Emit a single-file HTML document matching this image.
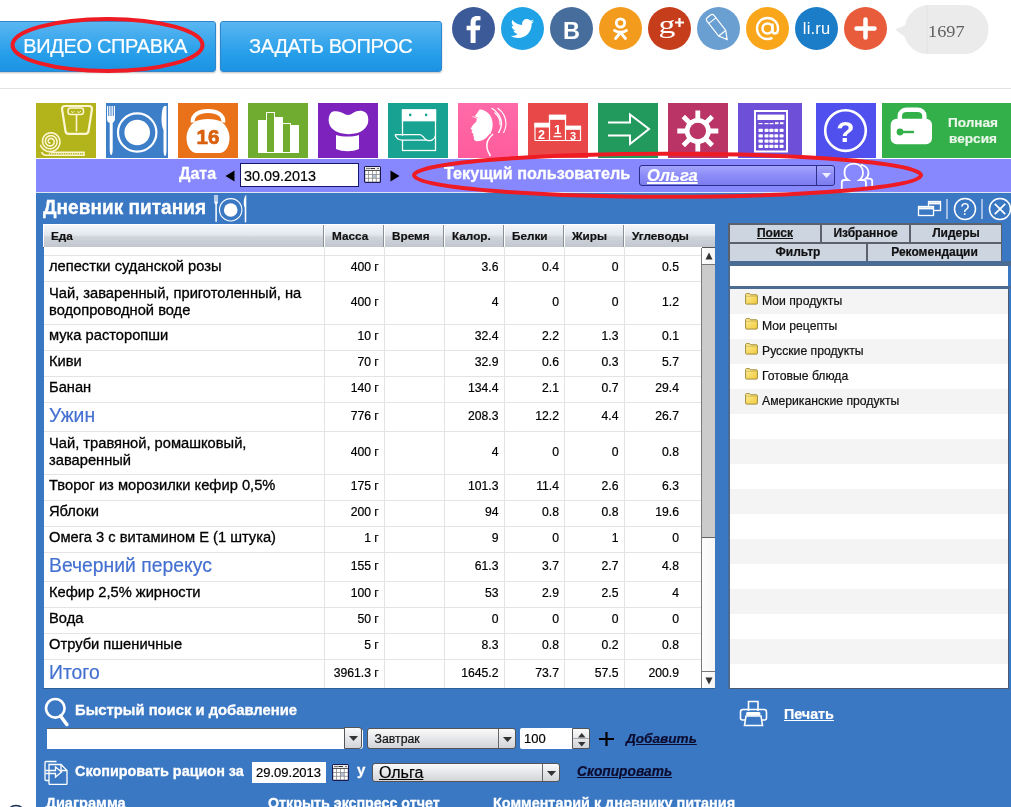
<!DOCTYPE html>
<html><head><meta charset="utf-8">
<style>
*{box-sizing:border-box}
html,body{margin:0;padding:0}
body{width:1011px;height:807px;overflow:hidden;position:relative;background:#fff;will-change:transform;font-family:"Liberation Sans",sans-serif;color:#111}
.a{position:absolute}
.btn{position:absolute;top:21px;height:51px;border-radius:3px;border:1px solid #2f86cf;background:linear-gradient(#5ab6f1,#2aa0ea 60%,#1a93e3);color:#fff;font-size:20px;letter-spacing:-0.35px;line-height:49px;box-shadow:0 1px 2px rgba(0,0,0,.25)}
.soc{position:absolute;top:7px;width:43px;height:43px;border-radius:50%}
.tile{position:absolute;top:103px;height:55px;width:60px}
.pbar{position:absolute;left:36px;top:159px;width:975px;height:33px;background:#8888fe}
.panel{position:absolute;left:36px;top:193px;width:975px;height:614px;background:#3b78c3}
.wt{color:#fff;font-weight:bold;-webkit-text-stroke:0.3px #fff}
div,span,u{-webkit-text-stroke-width:.2px}
</style></head><body>

<style>
.vl{top:0;width:1px;height:441px;background:#e4e4e4}
.hl{left:0;width:658px;height:1px;background:#e4e4e4}
.food{font-size:14.7px;color:#000;white-space:nowrap;-webkit-text-stroke:0.3px #000}
.meal{font-size:20.8px;color:#4470d0;white-space:nowrap;transform:scaleX(.93);transform-origin:0 0}
.num{font-size:12.2px;color:#000;white-space:nowrap;text-align:right;-webkit-text-stroke:0.2px #000}
.thead{background:linear-gradient(#f4f6f9,#e3e7ec 45%,#cfd3da 55%,#c2c6ce);border-top:1px solid #fff;border-bottom:1px solid #555}
.th{top:0;height:22px;border-right:1px solid #8a8e96;border-left:1px solid #fff}
.th span{position:absolute;left:7px;top:0;line-height:22px;font-size:11.75px;font-weight:bold;color:#111}
</style>
<style>
.tab{background:#ccd5e0;font-size:12px;font-weight:bold;color:#111;text-align:center;line-height:17px}
.li{font-size:12.2px;color:#111;line-height:25px;white-space:nowrap}
</style>
<style>
.dd{background:linear-gradient(#fafafa,#e6e7ea 50%,#d2d4d8);border:1px solid #555}
.lnk{font-size:14px;font-weight:bold;font-style:italic;color:#0c0c30;text-decoration:underline;line-height:18px;white-space:nowrap}
</style>
<div class="btn" style="left:-4px;width:220px;"><span class="a" style="left:26.3px;top:0">ВИДЕО СПРАВКА</span></div>
<div class="btn" style="left:220px;width:222px;"><span class="a" style="left:28px;top:0">ЗАДАТЬ ВОПРОС</span></div>
<div class="a" style="left:0;top:88px;width:1011px;height:1px;background:#e2e2e2"></div>
<!-- social -->
<div class="soc" style="left:452px;background:#3d5a98"><svg width="43" height="43" viewBox="0 0 43 43"><path d="M23.6 36V23.2h4.2l.6-4.6h-4.8v-3c0-1.3.4-2.3 2.3-2.3h2.6V9.2c-.5-.1-2-.2-3.7-.2-3.7 0-6.2 2.2-6.2 6.4v3.3h-4v4.6h4V36z" fill="#fff"/></svg></div>
<div class="soc" style="left:501px;background:#1fa3e6"><svg width="43" height="43" viewBox="0 0 43 43"><path d="M33 14.3c-.9.4-1.8.6-2.7.7 1-.6 1.7-1.5 2.1-2.6-.9.5-1.9.9-3 1.1-.9-.9-2.1-1.5-3.5-1.5-2.6 0-4.8 2.1-4.8 4.8 0 .4 0 .7.1 1.1-4-.2-7.5-2.1-9.8-5-.4.7-.6 1.5-.6 2.4 0 1.7.8 3.1 2.1 4-.8 0-1.5-.2-2.2-.6v.1c0 2.3 1.6 4.2 3.8 4.7-.4.1-.8.2-1.3.2-.3 0-.6 0-.9-.1.6 1.9 2.4 3.3 4.5 3.3-1.6 1.3-3.7 2-6 2-.4 0-.8 0-1.1-.1 2.1 1.4 4.7 2.2 7.3 2.2 8.8 0 13.6-7.3 13.6-13.6v-.6c.9-.7 1.7-1.5 2.4-2.5z" fill="#fff"/></svg></div>
<div class="soc" style="left:550px;background:#476d9d"><svg width="43" height="43" viewBox="0 0 43 43"><text x="21.5" y="31.6" text-anchor="middle" font-family="Liberation Sans" font-weight="bold" font-size="23.5" fill="#fff">B</text></svg></div>
<div class="soc" style="left:599px;background:#f39b1d"><svg width="43" height="43" viewBox="0 0 43 43"><circle cx="21.5" cy="16" r="4.2" fill="none" stroke="#fff" stroke-width="2.8"/><path d="M15.5 23.5q6 3.5 12 0M21.5 25.5l-5 6M21.5 25.5l5 6" stroke="#fff" stroke-width="2.8" fill="none" stroke-linecap="round"/></svg></div>
<div class="soc" style="left:648px;background:#c63d1b"><svg width="43" height="43" viewBox="0 0 43 43"><text x="0" y="0" transform="translate(19 26) scale(1.35 1)" text-anchor="middle" font-family="Liberation Serif" font-size="25" fill="#fff">g</text><path d="M31.5 11v9M27 15.5h9" stroke="#fff" stroke-width="2.2"/></svg></div>
<div class="soc" style="left:697px;background:#6a9fd1"><svg width="43" height="43" viewBox="0 0 43 43"><g transform="rotate(-38 21.5 21.5)" fill="none" stroke="#fff" stroke-width="1.2"><path d="M17 8.5c0-1.5 1-2.5 2.5-2.5h4c1.5 0 2.5 1 2.5 2.5v19l-4.5 8-4.5-8z"/><path d="M17 11.5h9M17 27.5h9M21.5 35.5v-2"/></g></svg></div>
<div class="soc" style="left:746px;background:#f9a61b"><svg width="43" height="43" viewBox="0 0 43 43"><circle cx="21.5" cy="21.5" r="5" fill="none" stroke="#fff" stroke-width="2.5"/><path d="M26.5 16.5v7c0 2 1 3 2.5 3s3-1.5 3-5c0-6-4.5-10.5-10.5-10.5S11 15.5 11 21.5 15.5 32 21.5 32c2 0 3.5-.5 5-1.2" fill="none" stroke="#fff" stroke-width="2.4"/></svg></div>
<div class="soc" style="left:795px;background:#1b7cc7"><svg width="43" height="43" viewBox="0 0 43 43"><text x="21.5" y="27" text-anchor="middle" font-family="Liberation Sans" font-size="16.5" fill="#fff" textLength="27.5">li.ru</text></svg></div>
<div class="soc" style="left:844px;background:#e85c3b"><svg width="43" height="43" viewBox="0 0 43 43"><path d="M21.5 12.5v18M12.5 21.5h18" stroke="#fff" stroke-width="4.5" stroke-linecap="round"/></svg></div>
<svg class="a" style="left:893px;top:4px" width="98" height="52" viewBox="0 0 98 52"><path d="M35 1h36a24.5 24.5 0 0 1 0 49H35a24.5 24.5 0 0 1-23.5-17.5L2 25.5l10-4A24.5 24.5 0 0 1 35 1z" fill="#ebebeb"/><path d="M34 1v49" stroke="#e2e2e2" stroke-width="1"/><text x="0" y="0" transform="translate(53.3 33) scale(1.12 1)" text-anchor="middle" font-family="Liberation Serif" font-size="16.3" fill="#606060">1697</text></svg>
<div class="tile" style="left:36px;background:#b3b41c"><svg width="60" height="55" viewBox="0 0 60 55" fill="none" stroke="#fdf6d2" stroke-width="2">
<path d="M29 3h24c2 0 3 1 3 3l-3.5 22c-.3 1.8-1 2.8-3 2.8H32.5c-2 0-2.7-1-3-2.8L26 6c0-2 1-3 3-3z" stroke-width="2.2"/><rect x="32" y="5" width="15.5" height="6.5" rx="2.5" stroke-width="1.5"/><path d="M35 8.5l2 1 1.5-1.5M41 8.5l2 1 2-1.5" stroke-width=".9"/><path d="M40.5 11.5v17" stroke-width="1.6"/>
<path d="M14.50 40.00 L14.34 40.04 L14.18 40.06 L14.01 40.06 L13.84 40.05 L13.67 40.02 L13.49 39.96 L13.32 39.89 L13.15 39.80 L13.00 39.68 L12.85 39.55 L12.71 39.40 L12.58 39.23 L12.47 39.05 L12.38 38.85 L12.31 38.64 L12.27 38.42 L12.24 38.19 L12.24 37.95 L12.26 37.71 L12.31 37.47 L12.39 37.23 L12.49 37.00 L12.61 36.77 L12.77 36.56 L12.94 36.36 L13.14 36.17 L13.36 36.00 L13.61 35.86 L13.86 35.74 L14.14 35.64 L14.43 35.57 L14.72 35.54 L15.03 35.53 L15.34 35.55 L15.64 35.61 L15.95 35.70 L16.25 35.82 L16.54 35.97 L16.81 36.16 L17.07 36.37 L17.31 36.61 L17.53 36.88 L17.72 37.18 L17.88 37.50 L18.01 37.83 L18.10 38.18 L18.16 38.55 L18.18 38.92 L18.17 39.30 L18.11 39.67 L18.02 40.05 L17.89 40.42 L17.71 40.77 L17.50 41.12 L17.26 41.44 L16.98 41.74 L16.66 42.01 L16.32 42.25 L15.95 42.46 L15.56 42.63 L15.15 42.76 L14.72 42.85 L14.28 42.89 L13.83 42.89 L13.38 42.85 L12.94 42.76 L12.50 42.62 L12.07 42.44 L11.66 42.21 L11.27 41.94 L10.91 41.63 L10.57 41.28 L10.27 40.89 L10.01 40.48 L9.79 40.03 L9.62 39.56 L9.49 39.07 L9.41 38.56 L9.39 38.05 L9.41 37.53 L9.49 37.01 L9.62 36.50 L9.81 36.00 L10.04 35.51 L10.33 35.05 L10.67 34.62 L11.05 34.22 L11.47 33.85 L11.93 33.53 L12.42 33.26 L12.95 33.03 L13.50 32.86 L14.06 32.74 L14.65 32.68 L15.24 32.68 L15.83 32.73 L16.41 32.85 L16.99 33.03 L17.55 33.27 L18.09 33.56 L18.59 33.92 L19.07 34.32 L19.50 34.77 L19.89 35.27 L20.23 35.80 L20.51 36.38 L20.74 36.98 L20.91 37.61 L21.01 38.25 L21.05 38.91 L21.02 39.57 L20.92 40.24 L20.76 40.89 L20.53 41.52 L20.23 42.14 L19.88 42.72 L19.46 43.27 L18.98 43.78 L18.46 44.24 L17.88 44.65 L17.27 45.00 L16.61 45.29 L15.93 45.51 L15.22 45.67 L14.50 45.75 L13.77 45.76 L13.03 45.69 L12.31 45.55 L11.59 45.34 L10.90 45.05 L10.23 44.70 L9.60 44.27 L9.01 43.78 L8.47 43.24 L7.99 42.63 L7.57 41.98 L7.21 41.28 L6.92 40.55 L6.71 39.78 L6.58 39.00 L6.52 38.20 L6.54 37.39 L6.65 36.59 L6.84 35.80 L7.11 35.02 L7.45 34.27 L7.88 33.56 L8.37 32.89 L8.94 32.27 L9.56 31.70 L10.25 31.20 L10.98 30.77 L11.76 30.41 L12.57 30.13 L13.42 29.94 L14.28 29.83 L15.16 29.80 L16.03 29.87 L16.91 30.02 L17.76 30.26 L18.59 30.59 L19.39 31.00 L20.15 31.50 L20.85 32.06 L21.50 32.71 L22.09 33.41 L22.60 34.18 L23.04 35.00 L23.39 35.86 L23.65 36.75 L23.83 37.68 L23.91 38.62 L23.90 39.57 L23.79 40.51 L23.58 41.45 L23.28 42.37 L22.89 43.25 L22.41 44.10 L21.84 44.89 L21.19 45.63 L20.47 46.30 L19.68 46.90 L18.84 47.42 L17.93 47.85 L16.99 48.20 L16.01 48.44 L15.01 48.59 L13.99 48.64 L12.97 48.58 L11.95 48.42 L10.96 48.16 L9.98 47.79 L9.05 47.33 L8.16 46.78 L7.33 46.13 L6.57 45.40 L5.88 44.60 L5.27 43.73 L4.75 42.79 L4.32 41.81" stroke-width="1.6"/><path d="M14.5 49.2H48v3H10c-2 0-3.5-1-4.5-3" stroke-width="1.6"/><path d="M13 50.7h33" stroke-dasharray="1 1.3" stroke-width="1.4"/></svg></div>
<div class="tile" style="left:106px;width:62px;background:#3d7ec8"><svg width="62" height="55" viewBox="0 0 62 55" fill="#fff">
<path d="M1 3h1.2v10h1v-10h1.3v10h1v-10h1.3v10h1v-10h1.2v13c0 2-1.5 3-2.3 4v26c0 3-.5 6-1.5 6s-1.5-3-1.5-6v-26C1.5 19 1 18 1 16z"/>
<circle cx="31.2" cy="29.5" r="19.2" fill="none" stroke="#fff" stroke-width="2.2"/><circle cx="31.2" cy="29.5" r="12.8"/>
<path d="M58.5 3c-2 1-3 6-3 14 0 5 1.5 9 2 10v20c0 3 .6 6 1.6 6s1.4-3 1.4-6V3z"/></svg></div>
<div class="tile" style="left:178px;background:#e9711a"><svg width="60" height="55" viewBox="0 0 60 55">
<path d="M14.8 19.5c-1-7.5 6-11.5 15.2-11.5s16.2 4 15.2 11.5" fill="none" stroke="#fff" stroke-width="4"/>
<path d="M17 18.5C12 22 8.5 28 8.5 35c0 9 5 15 10 15h23c5 0 10-6 10-15 0-7-3.5-13-8.5-16.5-3-1.5-8-2.5-13-2.5s-10 1-13 2.5z" fill="#fff"/>
<text x="30" y="40.8" text-anchor="middle" font-family="Liberation Sans" font-weight="bold" font-size="20.5" fill="#d9600e" stroke="#d9600e" stroke-width=".7">16</text></svg></div>
<div class="tile" style="left:248px;background:#6fac30"><svg width="60" height="55" viewBox="0 0 60 55" stroke="#fff" stroke-width="1">
<rect x="10.5" y="17.5" width="8" height="32" fill="#fff"/><rect x="18.5" y="9.5" width="8" height="40" fill="#6fac30"/><rect x="26.5" y="14.5" width="8" height="35" fill="#fff"/><rect x="34.5" y="20.5" width="8" height="29" fill="#6fac30"/><rect x="42.5" y="22.5" width="8" height="27" fill="#fff"/></svg></div>
<div class="tile" style="left:318px;background:#7d22bd"><svg width="60" height="55" viewBox="0 0 60 55" fill="#fff">
<path d="M15 8.5c4-1 9 .5 12.5 3 3 1 5 .5 7.5-1.5 4-2.5 9-3 12.5-.5 3 2.5 3.5 8 2 12-2 4.5-6 7-10 8.5-6 1.5-12 1.5-17.5 0-5-1.5-10-5-11-10-1-5 .5-10.5 4-11.5z"/>
<path d="M18 32c7 2 16 2 23 0v14c-7 3-16 3-23 0z"/></svg></div>
<div class="tile" style="left:388px;background:#17a292"><svg width="60" height="55" viewBox="0 0 60 55" fill="none" stroke="#fff" stroke-width="1.3">
<rect x="14.5" y="7" width="33" height="40.5"/><rect x="14.5" y="7" width="33" height="10.7" fill="#fff"/><circle cx="22.2" cy="11.9" r="1.3" fill="#17a292" stroke="none"/><circle cx="38.1" cy="11.9" r="1.3" fill="#17a292" stroke="none"/>
<path d="M7 31.6H32c2.5 0 3.5 4 6.8 5.5 4 1.5 8.2-.5 8.7-5M7 31.6c1 3 3.5 5.5 7 5.5h24.8" fill="#17a292" stroke-width="1.3"/></svg></div>
<div class="tile" style="left:458px;background:linear-gradient(#ff6aa8,#ff5c9c)"><svg width="60" height="55" viewBox="0 0 60 55" fill="#fff">
<path d="M21.5 6.5c-1.5 2.5-3 4.5-4.5 6.5 1 1.5 2 1.5 3 1.5-1.5 2-2 3-1.5 4-3 2.5-5 5-6 7.5l2 1-1 2c.5 1 1.5 1.5 2 1.5-.5 1.5-.5 2.5.5 3.5-.5 2 0 3.5 2 4 2 .5 5 0 8-1.5 3.5-2.5 6.5-6 8-10 1.5-5 .5-11-2.5-15-2.5-3-6-5-9.5-5z"/>
<path d="M14.5 13.5c2 .5 4 1.5 5.5 3" fill="none" stroke="#fff" stroke-width=".9"/>
<path d="M33.5 5c5.5 3 10 9.5 10 15.5 0 4-1.5 7-3 9.5" fill="none" stroke="#fff" stroke-width="1.4"/><path d="M36.5 9.5c4 3.5 6 8 5.5 12.5" fill="none" stroke="#fff" stroke-width="1.1"/><path d="M39.5 5c5 3.5 8.5 9.5 8.5 16 0 4-1.5 7-2.5 9" fill="none" stroke="#fff" stroke-width="1.1"/><path d="M30 17c3 4 4 9 2 14" fill="none" stroke="#fff" stroke-width="1"/>
<path d="M35 31c-4.5 4-7 9-6 14 .5 3 2 5.5 3.5 8" fill="none" stroke="#fff" stroke-width="1.5"/></svg></div>
<div class="tile" style="left:528px;background:#e94848"><svg width="60" height="55" viewBox="0 0 60 55" fill="none" stroke="#fff" stroke-width="1.2">
<path d="M21.5 37.5V12.5h16v25M7 37.5v-17h14.5M37.5 23.5h15v14H7" /><rect x="21.5" y="12.2" width="16" height="4" fill="#fff"/><rect x="7" y="20.3" width="14.5" height="3.6" fill="#fff"/><rect x="37.5" y="23.2" width="15" height="3" fill="#fff"/>
<g fill="#fff" stroke="none" font-family="Liberation Sans" font-weight="bold"><text x="13.5" y="36" text-anchor="middle" font-size="12.5">2</text><text x="29.5" y="31" text-anchor="middle" font-size="13">1</text><text x="45" y="37" text-anchor="middle" font-size="11">3</text></g><path d="M25.5 33.5h8" stroke-width="1.5"/></svg></div>
<div class="tile" style="left:598px;background:#229a5e"><svg width="60" height="55" viewBox="0 0 60 55" fill="none" stroke="#fff" stroke-width="2">
<path d="M10 19.5h22V11.5L51 26 32 41V32.5H10"/></svg></div>
<div class="tile" style="left:668px;background:#ba3566"><svg width="60" height="55" viewBox="0 0 60 55">
<g stroke="#fff" stroke-width="4.8"><path d="M29.8 7.5v41M9.3 28h41M15.3 13.5l29 29M44.3 13.5l-29 29"/></g><circle cx="29.8" cy="28" r="13" fill="#fff"/><circle cx="29.8" cy="28" r="8.3" fill="#ba3566"/></svg></div>
<div class="tile" style="left:738px;width:64px;background:#6e50d8"><svg width="64" height="55" viewBox="0 0 64 55" fill="#fff">
<path d="M16 7h34v42.5H16z M18 9v38.5h30V9z" fill-rule="evenodd"/><rect x="19.5" y="11.6" width="27" height="5.4"/>
<rect x="20.5" y="20" width="4" height="1.2"/><rect x="26.5" y="20" width="4" height="1.2"/><rect x="31.5" y="20" width="4" height="1.2"/><rect x="37" y="19.2" width="3.5" height="2"/><rect x="42" y="19.2" width="3.5" height="2"/>
<rect x="20.5" y="25.8" width="4.4" height="3.2" rx=".7"/><rect x="26.5" y="25.8" width="4" height="3.2" rx=".7"/><rect x="31.3" y="25.8" width="4.2" height="3.2" rx=".7"/><rect x="36.4" y="25.8" width="3.8" height="3.2" rx=".7"/><rect x="41.6" y="25.8" width="4" height="3.2" rx=".7"/><rect x="20.5" y="31.2" width="4.4" height="3.2" rx=".7"/><rect x="26.5" y="31.2" width="4" height="3.2" rx=".7"/><rect x="31.3" y="31.2" width="4.2" height="3.2" rx=".7"/><rect x="36.4" y="31.2" width="3.8" height="3.2" rx=".7"/><rect x="41.6" y="31.2" width="4" height="3.2" rx=".7"/><rect x="20.5" y="36.5" width="4.4" height="3.2" rx=".7"/><rect x="26.5" y="36.5" width="4" height="3.2" rx=".7"/><rect x="31.3" y="36.5" width="4.2" height="3.2" rx=".7"/><rect x="36.4" y="36.5" width="3.8" height="3.2" rx=".7"/><rect x="41.6" y="36.5" width="4" height="3.2" rx=".7"/><rect x="20.5" y="41.8" width="4.4" height="3.2" rx=".7"/><rect x="26.5" y="41.8" width="4" height="3.2" rx=".7"/><rect x="31.3" y="41.8" width="4.2" height="3.2" rx=".7"/><rect x="36.4" y="41.8" width="3.8" height="3.2" rx=".7"/><rect x="41.6" y="41.8" width="4" height="3.2" rx=".7"/></svg></div>
<div class="tile" style="left:816px;background:#5050ee"><svg width="60" height="55" viewBox="0 0 60 55">
<circle cx="29.5" cy="27.6" r="20.3" fill="none" stroke="#fff" stroke-width="2.6"/><text x="29.5" y="38.5" text-anchor="middle" font-family="Liberation Sans" font-weight="bold" font-size="30" fill="#fff">?</text></svg></div>
<div class="tile" style="left:882px;width:129px;background:#33b04a"><svg width="60" height="55" viewBox="0 0 60 55">
<path d="M17.8 17.5V13c0-4 3-6.3 7-6.3h10.6c4 0 7 2.3 7 6.3v4.5" fill="none" stroke="#fff" stroke-width="4.4"/>
<rect x="8.7" y="15.8" width="41.3" height="25.5" rx="6" fill="#fff"/><circle cx="18" cy="29" r="3.4" fill="#33b04a"/><path d="M18 29h14" stroke="#33b04a" stroke-width="2.4"/></svg>
<div class="a" style="left:63px;top:11.7px;color:#eaf6ea;font-weight:bold;font-size:13.6px;line-height:16px;width:56px;text-align:center">Полная<br>версия</div></div>
<div class="pbar"></div>
<div class="a wt" style="left:179px;top:164px;font-size:16px;line-height:20px">Дата</div>
<svg class="a" style="left:225px;top:170px" width="10" height="12"><path d="M9.5 .5v11L.5 6z" fill="#000"/></svg>
<div class="a" style="left:240px;top:163px;width:119px;height:24px;background:#fff;border:1px solid #14146a;font-size:14.4px;line-height:25px;padding-left:3px;color:#000">30.09.2013</div>
<svg class="a" style="left:364px;top:166px" width="17" height="17" viewBox="0 0 17 17"><rect x=".6" y=".6" width="15.8" height="15.8" rx="1" fill="#fff" stroke="#1a1a50" stroke-width="1.2"/><rect x="1" y="1" width="15" height="3.5" fill="#eee"/><path d="M1 4.5h15" stroke="#555" stroke-width="1"/><g fill="#333"><circle cx="3" cy="2.5" r=".7"/><circle cx="5" cy="2.5" r=".7"/><rect x="6.5" y="2" width="4.5" height="1"/><circle cx="14" cy="2.5" r=".7"/></g><rect x="8.5" y="8.5" width="3.5" height="3.5" fill="#b8c4dc"/><path d="M4.5 5v11M8.5 5v11M12.3 5v11M1 8.5h15M1 12.3h15" stroke="#888" stroke-width=".8"/></svg>
<svg class="a" style="left:389.5px;top:169.5px" width="10" height="12"><path d="M.5 .5v11L9.5 6z" fill="#000"/></svg>
<div class="a wt" style="left:444px;top:162.8px;font-size:16.2px;line-height:20px">Текущий пользователь</div>
<div class="a" style="left:639px;top:165px;width:196px;height:21px;border:1px solid #2c2c8a;border-radius:3px;background:linear-gradient(#a4a4fd,#8c8cf8 50%,#7c7cf0)"><span class="a" style="left:7px;top:-1px;line-height:20px;font-size:16.5px;font-weight:bold;font-style:italic;color:#fff;text-decoration:underline;text-decoration-thickness:2px">Ольга</span><div class="a" style="left:176px;top:0;width:1px;height:19px;background:#2c2c8a"></div><svg class="a" style="left:182px;top:7px" width="9" height="5"><path d="M0 0h9L4.5 5z" fill="#eef"/></svg></div>
<svg class="a" style="left:840px;top:162px" width="36" height="30" viewBox="0 0 36 30" fill="none" stroke="#fff" stroke-width="1.8"><path d="M1.8 27V20.5Q1.8 18 4.3 18H8.2C5.5 16.2 4.5 13.2 4.5 10.2 4.5 5 8.5 1.6 13.8 1.6S23 5 23 10.2C23 13.2 22 16.2 19.4 18H23.5Q26 18 26 20.5V27"/><path d="M20.8 2.6C25 3.5 28.5 6.5 28.5 10.5 28.5 13 27.5 15.2 25.6 16.6H29.5Q32.2 16.6 32.2 19.2V26"/></svg>
<div class="panel"></div>
<div class="a" style="left:36px;top:192px;width:975px;height:1px;background:#dfe6f3"></div>
<div class="a wt" style="left:43px;top:194.5px;font-size:20.5px;line-height:24px;transform:scaleX(0.93);transform-origin:0 0;white-space:nowrap">Дневник питания</div>
<svg class="a" style="left:213px;top:194px" width="35" height="30" viewBox="0 0 35 30" fill="#fff"><path d="M1.3 1h3.6v7.5c0 .8-.5 1.5-1 2v16.5c0 .6-.3 1-.8 1s-.8-.4-.8-1V10.5c-.5-.5-1-1.2-1-2z" opacity=".95"/><rect x="1.3" y="1" width="3.6" height="6.5" fill="#b8cde8"/><circle cx="17.7" cy="15.8" r="11.2" fill="none" stroke="#fff" stroke-width="1.1"/><circle cx="17.7" cy="16" r="6.8"/><path d="M33.3 1c-1.3.6-2.6 3.5-2.6 8 0 2.5.8 4 1 4.5v14c0 .6.3 1 .8 1s.8-.4.8-1z"/></svg>
<!-- top right icons -->
<svg class="a" style="left:916px;top:197px" width="95" height="26" viewBox="0 0 95 26" fill="none" stroke="#fff"><g stroke-width="1.3"><rect x="12.5" y="4.5" width="12" height="9"/><path d="M12.5 6.3h12" stroke-width="2.2"/><rect x="2.5" y="9.5" width="15" height="9" fill="#3b78c3"/><path d="M2.5 11.3h15" stroke-width="2.2"/></g><path d="M31 2v20M66 2v20" stroke-width="1.2" stroke="#e4ecf8"/><circle cx="49" cy="12" r="10.5" stroke-width="1.5"/><text x="49" y="17.5" text-anchor="middle" font-family="Liberation Sans" font-size="16" fill="#fff" stroke="none">?</text><circle cx="84" cy="12" r="10.5" stroke-width="1.5"/><path d="M78.8 6.8l10.4 10.4M89.2 6.8L78.8 17.2" stroke-width="1.7"/></svg>
<!-- table header -->
<div class="a thead" style="left:43px;top:224px;width:672px;height:24px">
 <div class="a th" style="left:0;width:281px"><span>Еда</span></div>
 <div class="a th" style="left:281px;width:60px"><span>Масса</span></div>
 <div class="a th" style="left:341px;width:60px"><span>Время</span></div>
 <div class="a th" style="left:401px;width:60px"><span>Калор.</span></div>
 <div class="a th" style="left:461px;width:60px"><span>Белки</span></div>
 <div class="a th" style="left:521px;width:60px"><span>Жиры</span></div>
 <div class="a th" style="left:581px;width:91px;border-right:0"><span>Углеводы</span></div>
</div>
<div class="a" style="left:44px;top:247px;width:658px;height:441px;background:#fff;overflow:hidden">
<div class="a vl" style="left:280px"></div>
<div class="a vl" style="left:340px"></div>
<div class="a vl" style="left:400px"></div>
<div class="a vl" style="left:460px"></div>
<div class="a vl" style="left:520px"></div>
<div class="a vl" style="left:580px"></div>
<div class="a hl" style="top:8px"></div>
<div class="a hl" style="top:34px"></div>
<div class="a hl" style="top:77px"></div>
<div class="a hl" style="top:103px"></div>
<div class="a hl" style="top:129px"></div>
<div class="a hl" style="top:155px"></div>
<div class="a hl" style="top:184px"></div>
<div class="a hl" style="top:227px"></div>
<div class="a hl" style="top:253px"></div>
<div class="a hl" style="top:279px"></div>
<div class="a hl" style="top:305px"></div>
<div class="a hl" style="top:334px"></div>
<div class="a hl" style="top:360px"></div>
<div class="a hl" style="top:386px"></div>
<div class="a hl" style="top:412px"></div>
<div class="a food" style="left:5px;top:7px;height:25px;line-height:25px">лепестки суданской розы</div>
<div class="a num" style="right:323.2px;top:8px;height:25px;line-height:25px">400 г</div>
<div class="a num" style="right:203.5px;top:8px;height:25px;line-height:25px">3.6</div>
<div class="a num" style="right:143.0px;top:8px;height:25px;line-height:25px">0.4</div>
<div class="a num" style="right:83.5px;top:8px;height:25px;line-height:25px">0</div>
<div class="a num" style="right:23.0px;top:8px;height:25px;line-height:25px">0.5</div>
<div class="a food" style="left:5px;top:38.3px;line-height:17px">Чай, заваренный, приготоленный, на<br>водопроводной воде</div>
<div class="a num" style="right:323.2px;top:34px;height:42px;line-height:42px">400 г</div>
<div class="a num" style="right:203.5px;top:34px;height:42px;line-height:42px">4</div>
<div class="a num" style="right:143.0px;top:34px;height:42px;line-height:42px">0</div>
<div class="a num" style="right:83.5px;top:34px;height:42px;line-height:42px">0</div>
<div class="a num" style="right:23.0px;top:34px;height:42px;line-height:42px">1.2</div>
<div class="a food" style="left:5px;top:76px;height:25px;line-height:25px">мука расторопши</div>
<div class="a num" style="right:323.2px;top:77px;height:25px;line-height:25px">10 г</div>
<div class="a num" style="right:203.5px;top:77px;height:25px;line-height:25px">32.4</div>
<div class="a num" style="right:143.0px;top:77px;height:25px;line-height:25px">2.2</div>
<div class="a num" style="right:83.5px;top:77px;height:25px;line-height:25px">1.3</div>
<div class="a num" style="right:23.0px;top:77px;height:25px;line-height:25px">0.1</div>
<div class="a food" style="left:5px;top:102px;height:25px;line-height:25px">Киви</div>
<div class="a num" style="right:323.2px;top:103px;height:25px;line-height:25px">70 г</div>
<div class="a num" style="right:203.5px;top:103px;height:25px;line-height:25px">32.9</div>
<div class="a num" style="right:143.0px;top:103px;height:25px;line-height:25px">0.6</div>
<div class="a num" style="right:83.5px;top:103px;height:25px;line-height:25px">0.3</div>
<div class="a num" style="right:23.0px;top:103px;height:25px;line-height:25px">5.7</div>
<div class="a food" style="left:5px;top:128px;height:25px;line-height:25px">Банан</div>
<div class="a num" style="right:323.2px;top:129px;height:25px;line-height:25px">140 г</div>
<div class="a num" style="right:203.5px;top:129px;height:25px;line-height:25px">134.4</div>
<div class="a num" style="right:143.0px;top:129px;height:25px;line-height:25px">2.1</div>
<div class="a num" style="right:83.5px;top:129px;height:25px;line-height:25px">0.7</div>
<div class="a num" style="right:23.0px;top:129px;height:25px;line-height:25px">29.4</div>
<div class="a meal" style="left:5px;top:153.55px;height:28px;line-height:28px">Ужин</div>
<div class="a num" style="right:323.2px;top:155px;height:28px;line-height:28px">776 г</div>
<div class="a num" style="right:203.5px;top:155px;height:28px;line-height:28px">208.3</div>
<div class="a num" style="right:143.0px;top:155px;height:28px;line-height:28px">12.2</div>
<div class="a num" style="right:83.5px;top:155px;height:28px;line-height:28px">4.4</div>
<div class="a num" style="right:23.0px;top:155px;height:28px;line-height:28px">26.7</div>
<div class="a food" style="left:5px;top:188.3px;line-height:17px">Чай, травяной, ромашковый,<br>заваренный</div>
<div class="a num" style="right:323.2px;top:184px;height:42px;line-height:42px">400 г</div>
<div class="a num" style="right:203.5px;top:184px;height:42px;line-height:42px">4</div>
<div class="a num" style="right:143.0px;top:184px;height:42px;line-height:42px">0</div>
<div class="a num" style="right:83.5px;top:184px;height:42px;line-height:42px">0</div>
<div class="a num" style="right:23.0px;top:184px;height:42px;line-height:42px">0.8</div>
<div class="a food" style="left:5px;top:226px;height:25px;line-height:25px">Творог из морозилки кефир 0,5%</div>
<div class="a num" style="right:323.2px;top:227px;height:25px;line-height:25px">175 г</div>
<div class="a num" style="right:203.5px;top:227px;height:25px;line-height:25px">101.3</div>
<div class="a num" style="right:143.0px;top:227px;height:25px;line-height:25px">11.4</div>
<div class="a num" style="right:83.5px;top:227px;height:25px;line-height:25px">2.6</div>
<div class="a num" style="right:23.0px;top:227px;height:25px;line-height:25px">6.3</div>
<div class="a food" style="left:5px;top:252px;height:25px;line-height:25px">Яблоки</div>
<div class="a num" style="right:323.2px;top:253px;height:25px;line-height:25px">200 г</div>
<div class="a num" style="right:203.5px;top:253px;height:25px;line-height:25px">94</div>
<div class="a num" style="right:143.0px;top:253px;height:25px;line-height:25px">0.8</div>
<div class="a num" style="right:83.5px;top:253px;height:25px;line-height:25px">0.8</div>
<div class="a num" style="right:23.0px;top:253px;height:25px;line-height:25px">19.6</div>
<div class="a food" style="left:5px;top:278px;height:25px;line-height:25px">Омега 3 с витамином Е (1 штука)</div>
<div class="a num" style="right:323.2px;top:279px;height:25px;line-height:25px">1 г</div>
<div class="a num" style="right:203.5px;top:279px;height:25px;line-height:25px">9</div>
<div class="a num" style="right:143.0px;top:279px;height:25px;line-height:25px">0</div>
<div class="a num" style="right:83.5px;top:279px;height:25px;line-height:25px">1</div>
<div class="a num" style="right:23.0px;top:279px;height:25px;line-height:25px">0</div>
<div class="a meal" style="left:5px;top:303.55px;height:28px;line-height:28px">Вечерний перекус</div>
<div class="a num" style="right:323.2px;top:305px;height:28px;line-height:28px">155 г</div>
<div class="a num" style="right:203.5px;top:305px;height:28px;line-height:28px">61.3</div>
<div class="a num" style="right:143.0px;top:305px;height:28px;line-height:28px">3.7</div>
<div class="a num" style="right:83.5px;top:305px;height:28px;line-height:28px">2.7</div>
<div class="a num" style="right:23.0px;top:305px;height:28px;line-height:28px">4.8</div>
<div class="a food" style="left:5px;top:333px;height:25px;line-height:25px">Кефир 2,5% жирности</div>
<div class="a num" style="right:323.2px;top:334px;height:25px;line-height:25px">100 г</div>
<div class="a num" style="right:203.5px;top:334px;height:25px;line-height:25px">53</div>
<div class="a num" style="right:143.0px;top:334px;height:25px;line-height:25px">2.9</div>
<div class="a num" style="right:83.5px;top:334px;height:25px;line-height:25px">2.5</div>
<div class="a num" style="right:23.0px;top:334px;height:25px;line-height:25px">4</div>
<div class="a food" style="left:5px;top:359px;height:25px;line-height:25px">Вода</div>
<div class="a num" style="right:323.2px;top:360px;height:25px;line-height:25px">50 г</div>
<div class="a num" style="right:203.5px;top:360px;height:25px;line-height:25px">0</div>
<div class="a num" style="right:143.0px;top:360px;height:25px;line-height:25px">0</div>
<div class="a num" style="right:83.5px;top:360px;height:25px;line-height:25px">0</div>
<div class="a num" style="right:23.0px;top:360px;height:25px;line-height:25px">0</div>
<div class="a food" style="left:5px;top:385px;height:25px;line-height:25px">Отруби пшеничные</div>
<div class="a num" style="right:323.2px;top:386px;height:25px;line-height:25px">5 г</div>
<div class="a num" style="right:203.5px;top:386px;height:25px;line-height:25px">8.3</div>
<div class="a num" style="right:143.0px;top:386px;height:25px;line-height:25px">0.8</div>
<div class="a num" style="right:83.5px;top:386px;height:25px;line-height:25px">0.2</div>
<div class="a num" style="right:23.0px;top:386px;height:25px;line-height:25px">0.8</div>
<div class="a meal" style="left:5px;top:410.55px;height:28px;line-height:28px">Итого</div>
<div class="a num" style="right:323.2px;top:412px;height:28px;line-height:28px">3961.3 г</div>
<div class="a num" style="right:203.5px;top:412px;height:28px;line-height:28px">1645.2</div>
<div class="a num" style="right:143.0px;top:412px;height:28px;line-height:28px">73.7</div>
<div class="a num" style="right:83.5px;top:412px;height:28px;line-height:28px">57.5</div>
<div class="a num" style="right:23.0px;top:412px;height:28px;line-height:28px">200.9</div>
</div><!-- scrollbar -->
<div class="a" style="left:701px;top:248px;width:14px;height:440px;background:linear-gradient(90deg,#fdfdfd,#f6f6f6);border-left:1px solid #7a7a7a"></div>
<div class="a" style="left:702px;top:264px;width:13px;height:274px;background:#cbcbcb;border-bottom:1px solid #666"></div>
<div class="a" style="left:702px;top:248px;width:13px;height:17px;background:linear-gradient(90deg,#fff,#f4f4f4);border-bottom:1px solid #777"></div>
<svg class="a" style="left:704.5px;top:251.5px" width="8" height="8"><path d="M4 .5L7.5 7.5H.5z" fill="#333"/></svg>
<div class="a" style="left:702px;top:671px;width:13px;height:17px;background:linear-gradient(90deg,#fff,#f4f4f4);border-top:1px solid #777"></div>
<svg class="a" style="left:704.5px;top:676.5px" width="8" height="8"><path d="M4 7.5L7.5 .5H.5z" fill="#333"/></svg>
<div class="a" style="left:43px;top:688px;width:672px;height:1px;background:#30609a"></div>
<!-- right tabs -->
<div class="a" style="left:728px;top:223px;width:274px;height:39px;background:#5b626b"></div>
<div class="a tab" style="left:730px;top:225px;width:90px;height:17px"><u>Поиск</u></div>
<div class="a tab" style="left:822px;top:225px;width:87px;height:17px">Избранное</div>
<div class="a tab" style="left:911px;top:225px;width:90px;height:17px">Лидеры</div>
<div class="a tab" style="left:730px;top:244px;width:136px;height:17px">Фильтр</div>
<div class="a tab" style="left:868px;top:244px;width:133px;height:17px">Рекомендации</div>
<div class="a" style="left:728px;top:261px;width:283px;height:5px;background:#4b6b93"></div>
<div class="a" style="left:728px;top:266px;width:2px;height:423px;background:#4b6b93"></div>
<div class="a" style="left:730px;top:266px;width:278px;height:20px;background:#fff"></div>
<div class="a" style="left:728px;top:286px;width:283px;height:3px;background:#4b6b93"></div>
<div class="a" style="left:730px;top:289px;width:279px;height:400px;background:#fff;border-right:1px solid #4a5a70;border-bottom:1px solid #4a5a70"></div>
<div class="a" style="left:730px;top:289px;width:278px;height:399px;overflow:hidden">
<div class="a" style="left:0;top:0px;width:278px;height:25px;background:#f4f4f4"></div>
<div class="a" style="left:0;top:25px;width:278px;height:25px;background:#fff"></div>
<div class="a" style="left:0;top:50px;width:278px;height:25px;background:#f4f4f4"></div>
<div class="a" style="left:0;top:75px;width:278px;height:25px;background:#fff"></div>
<div class="a" style="left:0;top:100px;width:278px;height:25px;background:#f4f4f4"></div>
<div class="a" style="left:0;top:125px;width:278px;height:25px;background:#fff"></div>
<div class="a" style="left:0;top:150px;width:278px;height:25px;background:#f4f4f4"></div>
<div class="a" style="left:0;top:175px;width:278px;height:25px;background:#fff"></div>
<div class="a" style="left:0;top:200px;width:278px;height:25px;background:#f4f4f4"></div>
<div class="a" style="left:0;top:225px;width:278px;height:25px;background:#fff"></div>
<div class="a" style="left:0;top:250px;width:278px;height:25px;background:#f4f4f4"></div>
<div class="a" style="left:0;top:275px;width:278px;height:25px;background:#fff"></div>
<div class="a" style="left:0;top:300px;width:278px;height:25px;background:#f4f4f4"></div>
<div class="a" style="left:0;top:325px;width:278px;height:25px;background:#fff"></div>
<div class="a" style="left:0;top:350px;width:278px;height:25px;background:#f4f4f4"></div>
<div class="a" style="left:0;top:375px;width:278px;height:25px;background:#fff"></div>
<svg class="a" style="left:15px;top:4px" width="13" height="12" viewBox="0 0 13 12"><path d="M.6 1.6C.6 1 1 .6 1.5.6h3l1.1 1.2h5.8c.6 0 1 .4 1 1v7.4c0 .5-.4.9-1 .9H1.5c-.5 0-.9-.4-.9-.9z" fill="url(#fg)" stroke="#a08c3c" stroke-width="1"/><path d="M1.2 3.3h10.6" stroke="#c8b050" stroke-width=".7"/></svg>
<div class="a li" style="left:32px;top:0px">Мои продукты</div>
<svg class="a" style="left:15px;top:29px" width="13" height="12" viewBox="0 0 13 12"><path d="M.6 1.6C.6 1 1 .6 1.5.6h3l1.1 1.2h5.8c.6 0 1 .4 1 1v7.4c0 .5-.4.9-1 .9H1.5c-.5 0-.9-.4-.9-.9z" fill="url(#fg)" stroke="#a08c3c" stroke-width="1"/><path d="M1.2 3.3h10.6" stroke="#c8b050" stroke-width=".7"/></svg>
<div class="a li" style="left:32px;top:25px">Мои рецепты</div>
<svg class="a" style="left:15px;top:54px" width="13" height="12" viewBox="0 0 13 12"><path d="M.6 1.6C.6 1 1 .6 1.5.6h3l1.1 1.2h5.8c.6 0 1 .4 1 1v7.4c0 .5-.4.9-1 .9H1.5c-.5 0-.9-.4-.9-.9z" fill="url(#fg)" stroke="#a08c3c" stroke-width="1"/><path d="M1.2 3.3h10.6" stroke="#c8b050" stroke-width=".7"/></svg>
<div class="a li" style="left:32px;top:50px">Русские продукты</div>
<svg class="a" style="left:15px;top:79px" width="13" height="12" viewBox="0 0 13 12"><path d="M.6 1.6C.6 1 1 .6 1.5.6h3l1.1 1.2h5.8c.6 0 1 .4 1 1v7.4c0 .5-.4.9-1 .9H1.5c-.5 0-.9-.4-.9-.9z" fill="url(#fg)" stroke="#a08c3c" stroke-width="1"/><path d="M1.2 3.3h10.6" stroke="#c8b050" stroke-width=".7"/></svg>
<div class="a li" style="left:32px;top:75px">Готовые блюда</div>
<svg class="a" style="left:15px;top:104px" width="13" height="12" viewBox="0 0 13 12"><path d="M.6 1.6C.6 1 1 .6 1.5.6h3l1.1 1.2h5.8c.6 0 1 .4 1 1v7.4c0 .5-.4.9-1 .9H1.5c-.5 0-.9-.4-.9-.9z" fill="url(#fg)" stroke="#a08c3c" stroke-width="1"/><path d="M1.2 3.3h10.6" stroke="#c8b050" stroke-width=".7"/></svg>
<div class="a li" style="left:32px;top:100px">Американские продукты</div>
</div>
<svg width="0" height="0" style="position:absolute"><defs><linearGradient id="fg" x1="0" y1="0" x2="1" y2="1"><stop offset="0" stop-color="#fff0a0"/><stop offset=".5" stop-color="#f8dc68"/><stop offset="1" stop-color="#f0c840"/></linearGradient></defs></svg><svg class="a" style="left:43px;top:697px" width="26" height="31" viewBox="0 0 26 31" fill="none" stroke="#fff"><circle cx="12.3" cy="11.3" r="9.3" stroke-width="2.6"/><path d="M17.5 19l6.3 8.5" stroke-width="3.6" stroke-linecap="round"/></svg>
<div class="a wt" style="left:75px;top:701px;font-size:14.8px;line-height:18px">Быстрый поиск и добавление</div>
<div class="a" style="left:46.5px;top:727.5px;width:316px;height:21.5px;background:#fff;border-top:1.5px solid #5a6470;border-radius:0 3px 3px 0"></div>
<div class="a dd" style="left:344px;top:727px;width:18px;height:22px;border-radius:0 3px 3px 0"><svg class="a" style="left:4px;top:8px" width="9" height="5"><path d="M0 0h9L4.5 5z" fill="#333"/></svg></div>
<div class="a dd" style="left:367px;top:728px;width:149px;height:21px;border-radius:3px"><span class="a" style="left:6.5px;top:0;line-height:20px;font-size:12.3px;color:#111">Завтрак</span><div class="a" style="left:130px;top:0;width:1px;height:19px;background:#666"></div><svg class="a" style="left:135px;top:8px" width="9" height="5"><path d="M0 0h9L4.5 5z" fill="#333"/></svg></div>
<div class="a" style="left:520px;top:728px;width:53px;height:21px;background:#fff;border-radius:2px 0 0 2px"><span class="a" style="left:4px;top:0;line-height:21px;font-size:13px;color:#000">100</span></div>
<div class="a dd" style="left:572px;top:728px;width:18px;height:21px;border-radius:0 2px 2px 0"><div class="a" style="left:0;top:9px;width:16px;height:1px;background:#aaa"></div><svg class="a" style="left:4.5px;top:3.5px" width="8" height="5"><path d="M0 4.5h7.5L3.75 0z" fill="#333"/></svg><svg class="a" style="left:4.5px;top:12.5px" width="8" height="5"><path d="M0 0h7.5L3.75 4.5z" fill="#333"/></svg></div>
<svg class="a" style="left:598.5px;top:731.5px" width="15" height="14"><path d="M7.5 0v14M0 7h15" stroke="#000" stroke-width="2.2"/></svg>
<div class="a lnk" style="left:626px;top:729.5px;font-size:13.6px">Добавить</div>
<svg class="a" style="left:42px;top:759px" width="28" height="26" viewBox="0 0 27 26" fill="none" stroke="#fff" stroke-width="1.3"><path d="M14 2.5H3.5c-.7 0-1 .4-1 1v17c0 .6.3 1 1 1h3"/><path d="M6.5 5.5h12l6 6v13c0 .6-.4 1-1 1H7.5c-.6 0-1-.4-1-1z" fill="#3b78c3"/><path d="M18.5 5.5v6h6"/><path d="M3 11.5h10V8l6 5-6 5v-3.5H3" /></svg>
<div class="a wt" style="left:75px;top:762px;font-size:14.4px;line-height:18px">Скопировать рацион за</div>
<div class="a" style="left:252px;top:762px;width:74px;height:21px;background:#fff;font-size:13px;line-height:21px;padding-left:4px;color:#000">29.09.2013</div>
<svg class="a" style="left:332px;top:764px" width="17" height="17" viewBox="0 0 17 17"><rect x=".6" y=".6" width="15.8" height="15.8" rx="1" fill="#fff" stroke="#1a1a50" stroke-width="1.2"/><rect x="1" y="1" width="15" height="3.5" fill="#eee"/><path d="M1 4.5h15" stroke="#555" stroke-width="1"/><g fill="#333"><circle cx="3" cy="2.5" r=".7"/><circle cx="5" cy="2.5" r=".7"/><rect x="6.5" y="2" width="4.5" height="1"/><circle cx="14" cy="2.5" r=".7"/></g><rect x="8.5" y="8.5" width="3.5" height="3.5" fill="#b8c4dc"/><path d="M4.5 5v11M8.5 5v11M12.3 5v11M1 8.5h15M1 12.3h15" stroke="#888" stroke-width=".8"/></svg>
<div class="a wt" style="left:357px;top:761px;font-size:15px;line-height:18px">у</div>
<div class="a dd" style="left:372px;top:763px;width:188px;height:19px;border-radius:3px"><span class="a" style="left:6px;top:-1.3px;line-height:20px;font-size:16px;color:#000;text-decoration:underline">Ольга</span><div class="a" style="left:169px;top:0;width:1px;height:17px;background:#666"></div><svg class="a" style="left:174px;top:7px" width="9" height="5"><path d="M0 0h9L4.5 5z" fill="#333"/></svg></div>
<div class="a lnk" style="left:577px;top:762.5px;font-size:13.75px">Скопировать</div>
<svg class="a" style="left:739px;top:700px" width="29" height="27" viewBox="0 0 29 27" fill="none" stroke="#fff" stroke-width="1.6"><path d="M9.5 11V1.5h9.5V11"/><path d="M7 20H3.5c-1 0-2-1-2-2v-6c0-1.5 1-2.5 2.5-2.5h21c1.5 0 2.5 1 2.5 2.5v6c0 1-1 2-2 2H22"/><path d="M7 16h15l1.5 9.5H5.5z"/><rect x="7" y="12" width="14.5" height="3.5" rx="1.5" fill="#fff" stroke="none"/></svg>
<div class="a" style="left:784px;top:705px;font-size:14.3px;font-weight:bold;color:#fff;text-decoration:underline;line-height:18px">Печать</div>
<div class="a wt" style="left:45.5px;top:793.5px;font-size:14.6px;line-height:18px">Диаграмма</div>
<div class="a wt" style="left:268px;top:793.5px;font-size:14.25px;line-height:18px">Открыть экспресс отчет</div>
<div class="a wt" style="left:493px;top:793.5px;font-size:14.4px;line-height:18px">Комментарий к дневнику питания</div>
<svg class="a" style="left:0;top:800px" width="34" height="7"><circle cx="16" cy="15" r="9.5" fill="#dce8f6" stroke="#1a3050" stroke-width="1.4"/></svg>
<!-- ellipses -->
<svg class="a" style="left:0;top:0" width="1011" height="807"><g fill="none" stroke="#ee1b24" stroke-width="4"><ellipse cx="107.5" cy="45" rx="95" ry="26"/><ellipse cx="667.5" cy="175.3" rx="253.5" ry="21.5" transform="rotate(0 667 175)"/></g></svg>
</body></html>
